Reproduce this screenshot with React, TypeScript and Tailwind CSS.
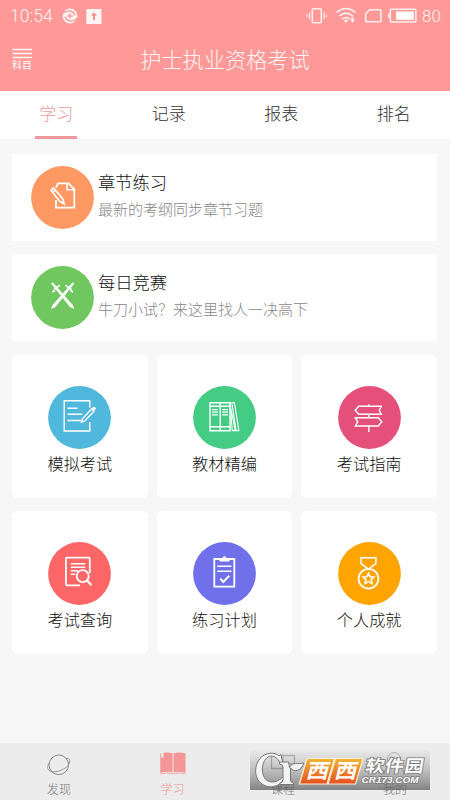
import React from "react";

const stroke = { fill: "none", stroke: "#fff", strokeWidth: 1.4 } as const;

function Disc({ color, children }: { color: string; children: React.ReactNode }) {
  return (
    <svg className="h-[63px] w-[63px] shrink-0" viewBox="0 0 63 63">
      <circle cx="31.5" cy="31.5" r="31.4" fill={color} />
      <g {...stroke}>{children}</g>
    </svg>
  );
}

const ChapterIcon = (
  <Disc color="#ff9963">
    <path d="M25 21.5 L27 17.3 H37.5 L43.3 23.2 V41.7 H25 V34" strokeWidth="1.8" />
    <path d="M36 17.5 V23.7 H43" strokeWidth="1.5" />
    <path d="M20 24.2 L22.6 22 L31.8 33 L33.2 38 L28.6 35.3 Z M21.8 26.2 L24.3 24.1" strokeWidth="1.6" />
  </Disc>
);

const SwordsIcon = (
  <Disc color="#70c75f">
    <g fill="#fff" stroke="none">
      <path d="M20.2 17.7 L21.7 16.2 L41.8 39 L43.4 43 L39.2 41.3 Z" />
      <path d="M43.2 17.7 L41.7 16.2 L21.6 39 L20 43 L24.2 41.3 Z" />
    </g>
    <path d="M21.3 26 L23.3 25 L23.6 22.8 L25.8 20.8 L27.5 20.6 L28.6 19 M42.1 26 L40.1 25 L39.8 22.8 L37.6 20.8 L35.9 20.6 L34.8 19" strokeWidth="1.6" />
  </Disc>
);

const ExamIcon = (
  <Disc color="#50b7dd">
    <path d="M41.8 21.5 V14.7 H16.2 V45 H41.8 V36" />
    <path d="M19.5 22.3 H29.5 M19.5 28.3 H34.3 M19.5 34.5 H32.8" />
    <path d="M33.4 36.2 L34.4 32.8 L43.6 23 L46 25.3 L36.5 35.2 Z" />
    <circle cx="46" cy="22.6" r="1.8" fill="#fff" stroke="none" />
  </Disc>
);

const BooksIcon = (
  <Disc color="#44cb84">
    <path d="M17 16.7 H37 V44.8 H17 Z M27.2 16.7 V44.8 M17 20.2 H37 M17 40.7 H37" />
    <path d="M19 23.6 H25 M19 26.2 H25 M19 28.8 H25 M29.2 23.6 H35 M29.2 26.2 H35 M29.2 28.8 H35" strokeWidth="1.2" />
    <path d="M37.2 17 L41.4 16.6 L45.9 44.6 H39.2 Z M39 18 L43 44.5 M37.3 20 L42.2 44" strokeWidth="1.1" />
  </Disc>
);

const SignIcon = (
  <Disc color="#e5507b">
    <path d="M30.8 18.3 V20.3 M30.8 28.3 V31.7 M30.8 40 V46" />
    <path d="M17.2 24.3 L20.7 20.3 H43.3 L41.3 24.3 L43.3 28.3 H20.7 Z" />
    <path d="M17.3 31.7 H40.3 L43.8 35.8 L40.3 40 H17.3 L19.7 35.8 Z" />
  </Disc>
);

const QueryIcon = (
  <Disc color="#ff6667">
    <path d="M41.8 31 V17 Q41.8 15.7 40.5 15.7 H19 Q17.9 15.7 17.9 17 V42 Q17.9 43.3 19 43.3 H32" strokeWidth="1.8" />
    <path d="M22.8 21.7 H37.3 M22.8 25.2 H37.3 M22.8 28.8 H30 M22.8 32.2 H27.2" strokeWidth="1.6" />
    <circle cx="34.7" cy="34.1" r="6" strokeWidth="1.9" />
    <path d="M39 38.5 L43.5 43.3" strokeWidth="2.2" />
  </Disc>
);

const PlanIcon = (
  <Disc color="#7070eb">
    <path d="M21.3 17 H41.3 V44.7 H21.3 Z" strokeWidth="1.8" />
    <path d="M26.5 19.4 V16.5 H29.4 Q29.8 14.2 31.5 14.2 Q33.2 14.2 33.6 16.5 H36.5 V19.4 Z" fill="#fff" stroke="none" />
    <path d="M24.2 24.3 H38.5 M24.2 29.2 H38.5" strokeWidth="1.5" />
    <path d="M27.4 36.6 L30.3 40 L36.3 33.8" strokeWidth="2.1" />
  </Disc>
);

const MedalIcon = (
  <Disc color="#ffa400">
    <path d="M23 15.8 H37.9 V21.7 L30.5 27 L23 21.7 Z" strokeWidth="1.5" />
    <circle cx="30.5" cy="36.7" r="9.9" strokeWidth="1.7" />
    <path d="M30.5 31.2 L32.1 34.7 L35.9 35.1 L33.1 37.7 L33.9 41.5 L30.5 39.6 L27.1 41.5 L27.9 37.7 L25.1 35.1 L28.9 34.7 Z" strokeWidth="1.6" />
  </Disc>
);

const tiles = [
  { label: "模拟考试", icon: ExamIcon },
  { label: "教材精编", icon: BooksIcon },
  { label: "考试指南", icon: SignIcon },
  { label: "考试查询", icon: QueryIcon },
  { label: "练习计划", icon: PlanIcon },
  { label: "个人成就", icon: MedalIcon },
];

const rows = [
  { title: "章节练习", sub: "最新的考纲同步章节习题", icon: ChapterIcon },
  { title: "每日竞赛", sub: "牛刀小试？来这里找人一决高下", icon: SwordsIcon },
];

function StatusBar() {
  return (
    <div className="flex h-8 items-center pr-[8px] pl-[10px] text-[#fff0f0]">
      <span className="w-[44px] font-[Roboto] text-[17.6px] leading-8 font-light">10:54</span>
      <svg className="ml-[8px] h-4 w-4" viewBox="0 0 16 16">
        <circle cx="8" cy="8" r="7.4" fill="#fff4f4" />
        <path d="M0 6.2 Q3.5 2.6 7.5 3 Q12 3.4 13.2 7.5 M16 9.8 Q12.5 13.4 8.5 13 Q4 12.6 2.8 8.5 M8 5.2 V10.8 M5.2 8 H10.8" fill="none" stroke="#f99" strokeWidth="1.3" />
      </svg>
      <svg className="ml-[8px] h-[15px] w-[16px]" viewBox="0 0 16 15">
        <rect x="0.3" width="15.2" height="15" fill="#fff4f4" />
        <path d="M8 3.2 L11 6.8 H9 V11 H7 V6.8 H5 Z" fill="#f88f8f" />
      </svg>
      <svg className="ml-auto h-5 w-[112px]" viewBox="306 6 112 20" fill="none" stroke="#fff0f0">
        <rect x="312.3" y="8.8" width="9" height="14" rx="1" strokeWidth="1.6" />
        <path d="M309.5 12.5 V19 M324.2 12.5 V19 M307 14.5 V17 M326.5 14.5 V17" strokeWidth="1.2" />
        <path d="M336.5 12.3 Q346 4.8 355.5 12.3 M339.3 15.8 Q346 10.3 352.7 15.8 M342 19.2 Q346 16 350 19.2" strokeWidth="1.6" />
        <path d="M343.8 20.3 Q346 18.7 348.2 20.3 L346 23 Z M350.3 19.5 H351.5 V16.5 H353.2 V19.5 H355.2 L352.4 23 Z" fill="#fff0f0" stroke="none" />
        <path d="M369.8 9.8 H380 Q381 9.8 381 10.8 V20.8 Q381 21.8 380 21.8 H366.7 Q365.7 21.8 365.7 20.8 V13.8 Z" strokeWidth="1.6" />
        <rect x="390.3" y="9.2" width="25.6" height="12.8" rx="1" strokeWidth="1.5" />
        <rect x="396" y="11.5" width="17.8" height="8.3" fill="#fff" stroke="none" />
        <path d="M388.8 13.5 V18" strokeWidth="1.5" />
      </svg>
      <span className="ml-[4px] w-5 font-[Roboto] text-[17px] leading-8 font-light">80</span>
    </div>
  );
}

function Watermark() {
  return (
    <svg className="absolute top-[7.5px] left-[250px] h-[42px] w-[180px]" viewBox="0 0 180 42">
      <defs>
        <linearGradient id="plate" x2="0" y2="1">
          <stop offset="0" stopColor="#e6e6e6" stopOpacity="0.5" />
          <stop offset="0.5" stopColor="#999" stopOpacity="0.55" />
          <stop offset="1" stopColor="#555" stopOpacity="0.7" />
        </linearGradient>
        <linearGradient id="amber" x2="0" y2="1">
          <stop offset="0" stopColor="#f2b532" />
          <stop offset="1" stopColor="#e64f20" />
        </linearGradient>
      </defs>
      <rect width="180" height="40" fill="url(#plate)" />
      <g fill="#f3f3f3" stroke="#777" strokeWidth="1">
        <path d="M31 4.5 L33 14 H30.5 C28 7 22 4.5 18 7 C11 11 10 27 18 31 C23 33.5 29 31 33 27 L34 29 C31 35 23 38.5 16 36 C4 32 3 17 10 8.5 C15 2.5 25 1.5 29 6 Z" />
        <path d="M29.5 12 H38.5 L39.5 17.5 C42 11.5 48 14.5 54 13 C51 21 44 23 40.5 17.8 V30 Q40.5 32.5 43.5 33 V34.5 H30 V33 Q33 32.5 33 30 V17 Q33 14.5 29.5 14 Z" />
      </g>
      <g stroke="#fff1d8" strokeWidth="1.2">
        <path d="M57 8.5 H84.5 L77 34 H49.5 Z" fill="url(#amber)" />
        <path d="M85.5 8.5 H113 L105.5 34 H78 Z" fill="url(#amber)" />
      </g>
      <g fontFamily="'Noto Sans CJK SC', sans-serif" fill="#fff">
        <text transform="translate(55.5 28.2) skewX(-14) scale(1.12 1)" fontSize="20" fontWeight="700">西</text>
        <text transform="translate(83.8 28.2) skewX(-14) scale(1.12 1)" fontSize="20" fontWeight="700">西</text>
        <text transform="translate(114.5 22) skewX(-10) scale(1.12 1)" fontSize="17" fontWeight="700" stroke="#777" strokeWidth="1.6" paintOrder="stroke" textLength="52">软件园</text>
      </g>
      <text x="111.5" y="33" fontFamily="'Liberation Sans', sans-serif" fontSize="9.5" fontWeight="bold" fontStyle="italic" fill="#fff" stroke="#777" strokeWidth="1.3" paintOrder="stroke" textLength="57" lengthAdjust="spacingAndGlyphs">CR173.COM</text>
    </svg>
  );
}

const navIcon = "h-[25px] w-[26px]";
const thin = { fill: "none", stroke: "#888", strokeWidth: 1 } as const;

const nav = [
  {
    label: "发现",
    icon: (
      <svg className={navIcon} viewBox="0 0 26 25" {...thin}>
        <circle cx="12.8" cy="12.8" r="9.8" />
        <path d="M20 6.5 C25.5 5.5 24.5 12 20 15.5 C14 20 5 21 2.5 18 C1 16 1.5 12.8 3.3 11" strokeWidth="0.8" />
      </svg>
    ),
  },
  {
    label: "学习",
    icon: (
      <svg className={navIcon} viewBox="0 0 26 25">
        <path d="M0.3 1.6 Q7 -0.5 12.5 1.3 V20.2 Q6.5 18.8 0.3 21 Z M13.5 1.3 Q19 -0.5 25.5 1.5 V21 Q19.5 18.8 13.5 20.2 Z" fill="#f39695" />
        <path d="M0.3 22 Q7 20 12 21.6 H14 Q19 20 25.5 22" fill="none" stroke="#f39695" strokeWidth="0.8" />
        <path d="M1.3 1 H3.5 V6.5 L2.4 5 L1.3 6.5 Z" fill="#ececec" />
      </svg>
    ),
  },
  {
    label: "课程",
    icon: (
      <svg className={navIcon} viewBox="0 0 26 25" {...thin}>
        <path d="M13 3.5 H1.5 V16.5 H22 V13 M13 3.5 V12 H24.5 V3.5 Z" strokeWidth="1.3" />
      </svg>
    ),
  },
  {
    label: "我的",
    icon: (
      <svg className={navIcon} viewBox="0 0 26 25" {...thin}>
        <circle cx="12" cy="7" r="6.5" />
        <path d="M2 22 Q3 14 12 14 Q21 14 22 22" />
      </svg>
    ),
  },
];

export default function App() {
  return (
    <div className="flex h-[800px] w-[450px] flex-col overflow-hidden bg-[#f7f7f7] font-['Noto_Sans_CJK_SC',sans-serif] font-light">
      <header className="h-[91px] bg-[#ff9997]">
        <StatusBar />
        <div className="grid h-[53px] grid-cols-[60px_1fr_60px] items-center">
          <div className="flex flex-col pt-px pl-3">
            <svg className="h-[11px] w-5" viewBox="0 0 20 11">
              <path d="M0.5 1.5 H20 M0.5 5.5 H20 M0.5 9.5 H20" stroke="#fff4f4" strokeWidth="1.6" />
            </svg>
            <span className="text-[10px] leading-[11px] font-normal text-white">科目</span>
          </div>
          <h1 className="text-center text-[21.2px] leading-[52px] text-[#fff4f4]">护士执业资格考试</h1>
        </div>
      </header>

      <nav className="grid h-12 grid-cols-4 bg-white text-center text-[17px] leading-[43px] text-[#333]">
        <div className="flex flex-col items-center text-[#f09b9a]">
          <span className="h-[45px]">学习</span>
          <i className="h-[2.5px] w-[42px] bg-[#f09b9a]" />
        </div>
        <span>记录</span>
        <span>报表</span>
        <span>排名</span>
      </nav>

      <main className="flex grow flex-col gap-[13px] pt-[14.5px] pr-[13px] pl-3">
        {rows.map((r) => (
          <section key={r.title} className="flex h-[87px] items-center bg-white pl-[19px]">
            {r.icon}
            <div className="ml-1 pb-[5px]">
              <h2 className="text-[17.3px] leading-7 text-[#111]">{r.title}</h2>
              <p className="text-[15px] leading-[26px] text-[#888]">{r.sub}</p>
            </div>
          </section>
        ))}
        <div className="mt-px grid grid-cols-3 gap-x-[9px] gap-y-[12.5px]">
          {tiles.map((t) => (
            <section key={t.label} className="flex h-[143.5px] flex-col items-center rounded-[6px] bg-white pt-[31px]">
              {t.icon}
              <span className="text-[16.2px] leading-[28px] text-[#111]">{t.label}</span>
            </section>
          ))}
        </div>
      </main>

      <footer className="relative h-[57.5px] shrink-0 bg-[#ececec] pl-[3px]">
        <div className="grid w-[448px] grid-cols-4">
          {nav.map((n, i) => (
            <div key={n.label} className={i === 1 ? "flex flex-col items-center pt-[9px] pl-[3px] text-[#f39695]" : "flex flex-col items-center pt-[9px] text-[#777]"}>
              {n.icon}
              <span className="text-[12px] leading-[24px]">{n.label}</span>
            </div>
          ))}
        </div>
        <Watermark />
      </footer>
    </div>
  );
}
